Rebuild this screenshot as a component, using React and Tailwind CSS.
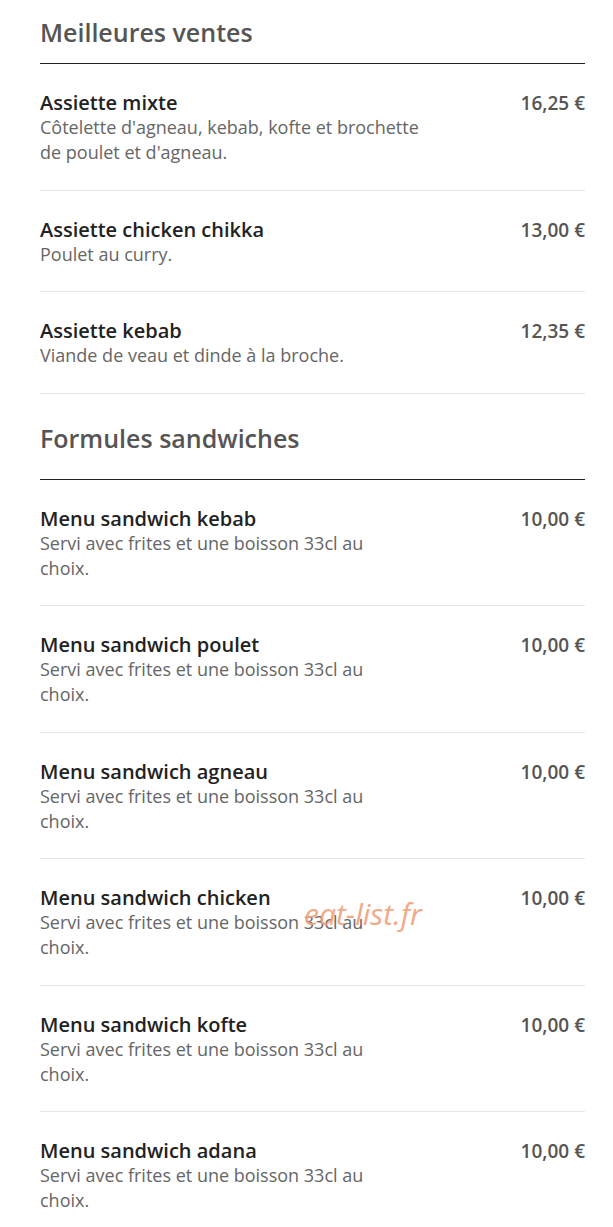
const sandwichDesc = ['Servi avec frites et une boisson 33cl au', 'choix.']

const sections = [
  {
    title: 'Meilleures ventes',
    first: true,
    items: [
      { name: 'Assiette mixte', desc: ["Côtelette d'agneau, kebab, kofte et brochette", "de poulet et d'agneau."], price: '16,25 €' },
      { name: 'Assiette chicken chikka', desc: ['Poulet au curry.'], price: '13,00 €' },
      { name: 'Assiette kebab', desc: ['Viande de veau et dinde à la broche.'], price: '12,35 €' },
    ],
  },
  {
    title: 'Formules sandwiches',
    items: [
      { name: 'Menu sandwich kebab', desc: sandwichDesc, price: '10,00 €' },
      { name: 'Menu sandwich poulet', desc: sandwichDesc, price: '10,00 €' },
      { name: 'Menu sandwich agneau', desc: sandwichDesc, price: '10,00 €' },
      { name: 'Menu sandwich chicken', desc: sandwichDesc, price: '10,00 €' },
      { name: 'Menu sandwich kofte', desc: sandwichDesc, price: '10,00 €' },
      { name: 'Menu sandwich adana', desc: sandwichDesc, price: '10,00 €' },
    ],
  },
]

export default function App() {
  return (
    <div className="relative min-h-screen bg-white font-['Open_Sans',sans-serif] pl-10 pr-7 overflow-hidden">
      {sections.map((s) => (
        <section key={s.title}>
          <h2 className={`text-[25px] leading-[32px] font-semibold text-[#555] ${s.first ? 'pt-4 pb-[15px]' : 'pt-7 pb-[25px]'}`}>
            {s.title}
          </h2>
          <div className="border-t border-[#222]">
            {s.items.map((it) => (
              <div key={it.name} className="flex justify-between items-start pt-[27px] pb-[24.5px] border-b border-[#e6e6e6]">
                <div>
                  <div className="text-[20px] leading-[24px] font-semibold text-[#222]">{it.name}</div>
                  <p className="text-[18px] leading-[25px] text-[#666] whitespace-nowrap">
                    {it.desc.map((line, i) => (
                      <span key={i}>
                        {i > 0 && <br />}
                        {line}
                      </span>
                    ))}
                  </p>
                </div>
                <div className="text-[19px] leading-[24px] font-semibold text-[#555] whitespace-nowrap">{it.price}</div>
              </div>
            ))}
          </div>
        </section>
      ))}
      <div className="absolute left-[304px] top-[894px] text-[30px] leading-[40px] italic text-[#f2a07a] opacity-90 pointer-events-none">
        eat-list.fr
      </div>
    </div>
  )
}
